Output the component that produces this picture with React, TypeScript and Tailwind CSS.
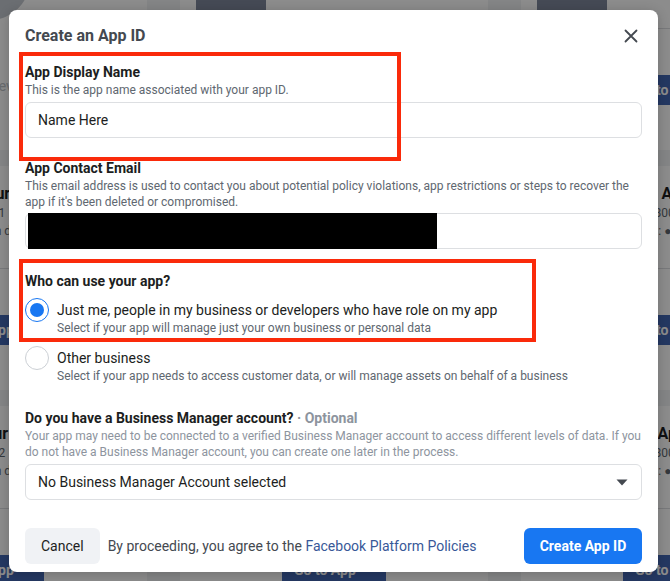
import React from "react";

function Card({ title, id, button }: { title: string; id: string; button: string }) {
  return (
    <div className="h-[224px] bg-white flex flex-col">
      <div className="flex gap-[17px] p-4 h-[103px] border-b border-[#dadde1]">
        <div className="w-[70px] h-[70px] shrink-0 bg-[#7f889c] flex items-center justify-center">
          <svg width="44" height="44" viewBox="0 0 44 44" fill="none" stroke="#c9ced8" strokeWidth="2">
            <ellipse cx="22" cy="22" rx="10" ry="16" />
            <path d="M6 22 Q22 34 38 22" />
          </svg>
        </div>
        <div className="flex flex-col pt-[2px] whitespace-nowrap">
          <div className="text-base font-bold text-[#1c1e21] leading-5">{title}</div>
          <div className="text-xs text-[#606770] leading-4 mt-[1px]">ID: {id}</div>
          <div className="text-xs text-[#606770] leading-4 mt-[2px]">
            Status: <span className="text-[#606770]">●</span> In development
          </div>
        </div>
      </div>
      <div className="pl-[102px] pt-[46px]">
        <div className="w-[104px] h-[30px] bg-[#4267b2] text-white text-sm font-bold flex items-center px-3 whitespace-nowrap">
          {button}
        </div>
      </div>
    </div>
  );
}

function IntroCard() {
  return (
    <div className="h-[224px] bg-white flex flex-col pl-[112px] pt-[14px]">
      <div className="w-[80px] h-[80px] rounded-full bg-[#c4c8cf]" />
      <div className="mt-[56px] ml-[40px] text-sm text-[#bec3c9] leading-5 whitespace-nowrap">Review</div>
    </div>
  );
}

function Background() {
  const cards = [
    ["Demo App", "3128876", "Go to App"],
    ["Test App", "1180042", "Go to App"],
    ["Your Tour", "2154091", "Go to App"],
    ["Demo App", "3128877", "Go to App"],
    ["Next App", "1180043", "Go to App"],
    ["Disc Tour", "2154092", "Go to App"],
    ["Demo App", "3128878", "Go to App"],
    ["Nn0 App", "1180044", "Go to App"],
  ];
  return (
    <div className="ml-[-162px] mt-[-74px] grid grid-cols-[309px_308px_308px] gap-x-[33px] gap-y-4">
      <IntroCard />
      {cards.map((c, i) => (
        <Card key={i} title={c[0]} id={c[1]} button={c[2]} />
      ))}
    </div>
  );
}

function Radio({ checked, title, sub }: { checked: boolean; title: string; sub: string }) {
  return (
    <div className="flex gap-2">
      <div
        className={
          checked
            ? "mt-[-3px] w-6 h-6 shrink-0 rounded-full border border-[#1877f2] bg-white flex items-center justify-center"
            : "mt-[-3px] w-6 h-6 shrink-0 rounded-full border border-[#ccd0d5] bg-white"
        }
      >
        {checked ? <div className="w-[14px] h-[14px] rounded-full bg-[#1877f2]" /> : null}
      </div>
      <div className="flex flex-col">
        <div className="text-sm leading-[18px] text-[#1c1e21]">{title}</div>
        <div className="text-xs leading-4 text-[#606770] mt-[1px]">{sub}</div>
      </div>
    </div>
  );
}

function Modal() {
  return (
    <div className="absolute left-[9px] top-[10px] w-[649px] bg-white rounded-lg px-4 pt-4 pb-2 shadow-[0_2px_12px_rgba(0,0,0,0.2)]">
      <div className="flex items-center justify-between h-5">
        <h2 className="text-base font-bold leading-5 text-[#444950]">Create an App ID</h2>
        <div className="w-5 h-5 mr-[1px] flex items-center justify-center">
          <svg width="14" height="14" viewBox="0 0 14 14" stroke="#444950" strokeWidth="1.8" strokeLinecap="round">
            <path d="M1.5 1.5 L12.5 12.5 M12.5 1.5 L1.5 12.5" />
          </svg>
        </div>
      </div>

      <div className="mt-[17px] text-sm font-bold leading-[18px] text-[#1c1e21]">App Display Name</div>
      <div className="text-xs leading-4 text-[#606770] mt-[1px]">This is the app name associated with your app ID.</div>
      <div className="mt-1 h-[36px] border border-[#dddfe2] rounded-md flex items-center px-3 text-sm text-[#1c1e21]">
        Name Here
      </div>

      <div className="mt-[21px] text-sm font-bold leading-[18px] text-[#1c1e21]">App Contact Email</div>
      <div className="text-xs leading-4 text-[#606770] mt-[1px]">
        This email address is used to contact you about potential policy violations, app restrictions or steps to recover the app if it's been deleted or compromised.
      </div>
      <div className="relative mt-[3px] h-[36px] border border-[#dddfe2] rounded-md">
        <div className="absolute left-[2px] top-[-1px] bottom-[-1px] w-[409px] bg-black" />
      </div>

      <div className="mt-[23px] text-sm font-bold leading-[18px] text-[#1c1e21]">Who can use your app?</div>
      <div className="mt-[11px] flex flex-col gap-[13px]">
        <Radio
          checked
          title="Just me, people in my business or developers who have role on my app"
          sub="Select if your app will manage just your own business or personal data"
        />
        <Radio
          checked={false}
          title="Other business"
          sub="Select if your app needs to access customer data, or will manage assets on behalf of a business"
        />
      </div>

      <div className="mt-[25px] text-sm font-bold leading-[18px] text-[#1c1e21]">
        Do you have a Business Manager account? <span className="text-[#8d949e]">· Optional</span>
      </div>
      <div className="text-xs leading-4 text-[#8d949e] mt-[1px]">
        Your app may need to be connected to a verified Business Manager account to access different levels of data. If you do not have a Business Manager account, you can create one later in the process.
      </div>
      <div className="mt-1 h-[36px] border border-[#dddfe2] rounded-md flex items-center justify-between pl-3 pr-[13px] text-sm text-[#1c1e21]">
        <span>No Business Manager Account selected</span>
        <svg width="12" height="7" viewBox="0 0 12 7">
          <path d="M0.5 0.5 H11.5 L6 6.5 Z" fill="#444950" />
        </svg>
      </div>

      <div className="mt-[28px] flex items-center justify-between">
        <div className="flex items-center gap-2">
          <div className="h-9 px-4 rounded-md bg-[#f0f2f5] flex items-center text-sm text-[#1c1e21]">Cancel</div>
          <div className="text-sm text-[#444950]">
            By proceeding, you agree to the <span className="text-[#385898]">Facebook Platform Policies</span>
          </div>
        </div>
        <div className="h-9 w-[118px] rounded-md bg-[#1877f2] flex items-center justify-center text-sm font-bold text-white">
          Create App ID
        </div>
      </div>

      <div className="absolute left-[10px] top-[42px] w-[382px] h-[109px] border-4 border-[#fa2a0a]" />
      <div className="absolute left-[10px] top-[249px] w-[517px] h-[83px] border-4 border-[#fa2a0a]" />
    </div>
  );
}

export default function App() {
  return (
    <div className="relative w-[670px] h-[581px] overflow-hidden bg-[#f0f2f5] font-[Roboto,sans-serif]">
      <Background />
      <div className="absolute inset-0 bg-black/45" />
      <Modal />
    </div>
  );
}
